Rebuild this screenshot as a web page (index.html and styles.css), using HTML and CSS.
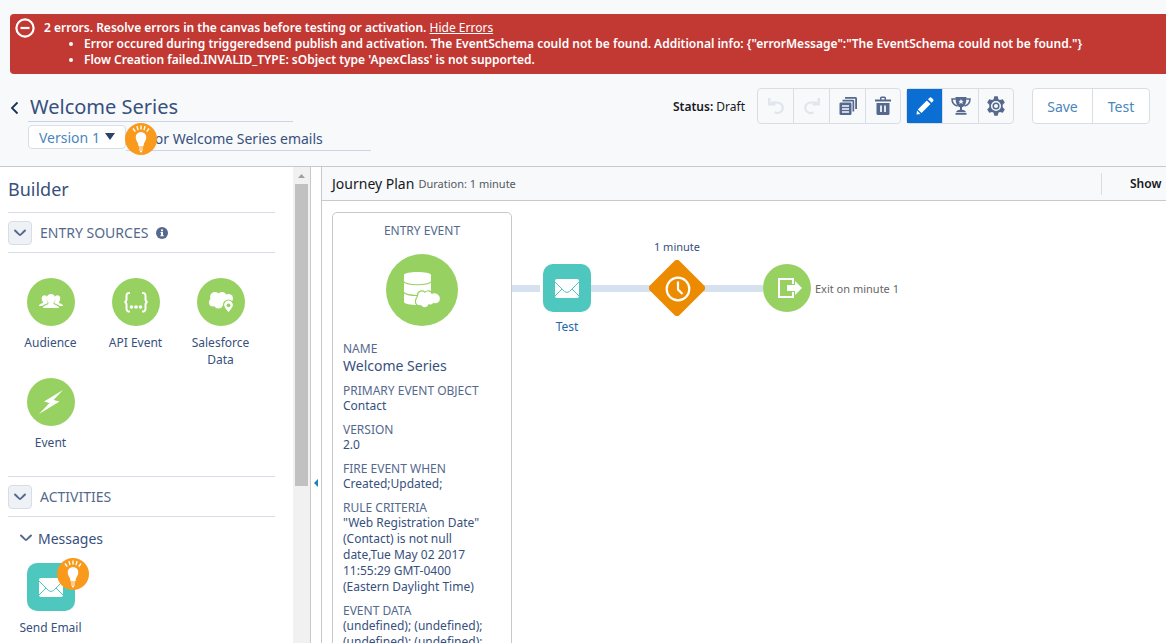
FILE: index.html
```html
<!DOCTYPE html>
<html lang="en">
<head>
<meta charset="utf-8">
<title>Welcome Series</title>
<link rel="stylesheet" href="styles.css">
</head>
<body>
<svg class="defs" aria-hidden="true">
  <symbol id="bulb" viewBox="0 0 32 32">
    <circle cx="16" cy="16" r="16" fill="#f99a1c"/>
    <g stroke="#fff" stroke-width="1.4" fill="none"><path d="M16 2.5v4M12 3.2l1 4M20 3.2l-1 4M8 5.5l2.3 3.2M24 5.5l-2.3 3.2"/></g>
    <path fill="#fff" d="M16 9a5.3 5.3 0 0 0-5.300 5.400c0 2.600 1.700 4 2.300 6.100.3 1 .3 2.500.8 3h4.400c.5-.5.5-2 .8-3 .6-2.100 2.300-3.500 2.300-6.100A5.300 5.300 0 0 0 16 9z"/>
    <path stroke="#fff" stroke-width="1.200" d="M14 25h4M14 27h4M15 28.700h2"/>
  </symbol>
  <symbol id="mail" viewBox="0 0 24 19">
    <rect width="24" height="19" rx="2" fill="#fff"/>
    <path d="M0 3l9.500 9.500q2.500 2 5 0L24 3M0 17l7-7M24 17l-7-7" fill="none" stroke="#4ec7be" stroke-width="1"/>
  </symbol>
  <symbol id="chevron" viewBox="0 0 12 8"><path d="M1 1.500q4.500 4.500 5 4.500t5-4.500" fill="none" stroke="currentColor" stroke-width="1.900" stroke-linecap="round"/></symbol>
</svg>

<section class="errors" role="alert">
  <svg class="errors-icon" viewBox="0 0 20 20"><circle cx="10" cy="10" r="8.600" fill="none" stroke="#fff" stroke-width="2.200"/><path d="M5.500 10h9" stroke="#fff" stroke-width="2.200"/></svg>
  <div>
    <p>2 errors. Resolve errors in the canvas before testing or activation. <a href="#">Hide Errors</a></p>
    <ul>
      <li>Error occured during triggeredsend publish and activation. The EventSchema could not be found. Additional info: {"errorMessage":"The EventSchema could not be found."}</li>
      <li>Flow Creation failed.INVALID_TYPE: sObject type 'ApexClass' is not supported.</li>
    </ul>
  </div>
</section>

<header class="header">
  <a class="back" href="#" aria-label="Back"><svg viewBox="0 0 9 14"><path d="M7.500 1.500L2 7l5.500 5.500" fill="none" stroke="currentColor" stroke-width="1.800"/></svg></a>
  <div class="naming">
    <input class="title" aria-label="Journey name" value="Welcome Series">
    <div class="subline">
      <div class="version">
        <select aria-label="Version"><option>Version 1</option></select>
        <svg viewBox="0 0 10 7"><path d="M0 0h10L5 7z" fill="#2a426c"/></svg>
      </div>
      <input class="description" aria-label="Description" value="for Welcome Series emails">
      <svg class="bulb bulb-header"><use href="#bulb"/></svg>
    </div>
  </div>
  <div class="tools">
    <p class="status"><b>Status:</b> Draft</p>
    <div class="group icons">
      <button disabled aria-label="Undo"><svg viewBox="0 0 20 20"><path d="M5 6.500h6.500a5.300 5.300 0 1 1-3 9.700" fill="none" stroke="currentColor" stroke-width="2.200"/><path d="M2 2v7.500h7.500V7.200H4.500V2z" fill="currentColor"/></svg></button>
      <button disabled aria-label="Redo"><svg viewBox="0 0 20 20"><path d="M15 6.500H8.500a5.300 5.300 0 1 0 3 9.700" fill="none" stroke="currentColor" stroke-width="2.200"/><path d="M18 2v7.500h-7.500V7.200h5V2z" fill="currentColor"/></svg></button>
      <button aria-label="Copy"><svg viewBox="0 0 20 20"><path fill="currentColor" d="M7 1h10.500A1.500 1.500 0 0 1 19 2.500V13h-1.800V2.800H7z"/><path fill="currentColor" d="M4.500 3.800H15a1.200 1.200 0 0 1 1.200 1.200v10.500h-1.700V5.500H4.500z"/><rect x="1.500" y="6.500" width="12" height="12.500" rx="1.200" fill="currentColor"/><path d="M4 10h7M4 13h7M4 16h7" stroke="#f8f9fb" stroke-width="1.300"/></svg></button>
      <button aria-label="Delete"><svg viewBox="0 0 20 20"><path fill="currentColor" d="M2 3.500h5V2q0-1.500 1.500-1.500h3Q13 .5 13 2v1.500h5v2H2zM8.500 2v1.500h3V2zM3.500 7h13v10.500q0 1.500-1.500 1.500H5q-1.500 0-1.500-1.500z" fill-rule="evenodd"/><path d="M8 9.500v6.500M12 9.500v6.500" stroke="#f8f9fb" stroke-width="1.700"/></svg></button>
    </div>
    <div class="group icons">
      <button class="active" aria-label="Edit"><svg viewBox="0 0 20 20"><path fill="currentColor" d="M13 3.200l1.500-1.500q1-.9 2 0l1.600 1.600q1 1 0 2l-1.500 1.500zM11.800 4.400l3.700 3.700-9 9-3.700-3.700zM2 14.500l3.500 3.500L1.500 18.500z"/></svg></button>
      <button aria-label="Goals"><svg viewBox="0 0 20 20"><path fill="currentColor" d="M4.500 1h11c0 5-1 9.500-4.500 10.300v2.500c2 .2 3.500 1 4 2.500H5c.5-1.500 2-2.300 4-2.500v-2.500C5.500 10.500 4.500 6 4.500 1zM4.500 17h11v1.800h-11z"/><path d="M4.800 3H1c0 4 1.500 6 5.500 7M15.200 3H19c0 4-1.500 6-5.500 7" fill="none" stroke="currentColor" stroke-width="1.500"/><path fill="#f8f9fb" d="M10 3l.8 1.800 1.900.1-1.500 1.200.6 1.900L10 7l-1.800 1 .6-1.900-1.500-1.200 1.900-.1z"/></svg></button>
      <button aria-label="Settings"><svg viewBox="0 0 20 20"><path fill="currentColor" d="M8.300.3h3.400l.7 2.900 1.500.9 2.900-.9 2 3.400-2.100 2.100v2.600l2.100 2.100-2 3.400-2.900-.9-1.500.9-.7 2.900H8.300l-.7-2.900-1.500-.9-2.900.9-2-3.400 2.100-2.100V8.700L1.200 6.600l2-3.400 2.900.9 1.500-.9z"/><circle cx="10" cy="10" r="4.300" fill="none" stroke="#f8f9fb" stroke-width="1.500"/><circle cx="10" cy="10" r="2" fill="#f8f9fb"/></svg></button>
    </div>
    <div class="group actions">
      <button>Save</button>
      <button>Test</button>
    </div>
  </div>
</header>

<div class="workspace">
  <aside class="sidebar">
    <h2>Builder</h2>
    <div class="section">
      <button class="toggle" aria-label="Toggle entry sources"><svg><use href="#chevron"/></svg></button>
      <h3>ENTRY SOURCES</h3>
      <svg class="info" viewBox="0 0 12 12"><circle cx="6" cy="6" r="6" fill="#54698d"/><path fill="#fff" d="M5 2.500h2v1.700H5zM4.500 5H7v3.300h.8v1H4.300v-1H5V6h-.5z"/></svg>
    </div>
    <div class="palette">
      <div class="item">
        <svg class="shape" viewBox="0 0 48 48"><circle cx="24" cy="24" r="24" fill="#97d162"/><g fill="#fff"><path d="M16 30c0-2 2-2.500 4.500-3.500 1.200-.5 1.200-1.500.5-2.500-2-2.500-1.800-8 3-8s5 5.500 3 8c-.7 1-.7 2 .5 2.500C30 27.500 32 28 32 30z"/><path d="M12 28c0-1.800 1.500-2 3.300-2.800 1-.4.8-1.200.3-2-1.500-2-1.200-6 2-6q2.200 0 2.400 1.500-.8 3.300.8 6-.3.800-2.500 1.500Q16 26.800 15.500 28zM36 28c0-1.800-1.500-2-3.300-2.800-1-.4-.8-1.200-.3-2 1.500-2 1.200-6-2-6q-2.200 0-2.400 1.500.8 3.300-.8 6 .3.800 2.500 1.500Q32 26.800 32.500 28z"/></g></svg>
        <span>Audience</span>
      </div>
      <div class="item">
        <svg class="shape" viewBox="0 0 48 48"><circle cx="24" cy="24" r="24" fill="#97d162"/><path d="M18 15q-3.500-.3-3.500 3v3q0 2.700-2 3 2 .3 2 3v3.500q0 3.300 3.500 3M30 15q3.500-.3 3.500 3v3q0 2.700 2 3-2 .3-2 3v3.500q0 3.300-3.500 3" fill="none" stroke="#fff" stroke-width="2"/><g fill="#fff"><circle cx="19.500" cy="29" r="1.800"/><circle cx="24" cy="29" r="1.800"/><circle cx="28.500" cy="29" r="1.800"/></g></svg>
        <span>API Event</span>
      </div>
      <div class="item">
        <svg class="shape" viewBox="0 0 48 48"><circle cx="24" cy="24" r="24" fill="#97d162"/><g fill="#fff"><circle cx="18" cy="19" r="5"/><circle cx="25" cy="18.500" r="4.500"/><circle cx="31.500" cy="20.500" r="4.500"/><circle cx="16" cy="24.500" r="4"/><circle cx="21.500" cy="26" r="4.500"/><circle cx="27" cy="23" r="5"/></g><path d="M31.500 22a5 5 0 0 0-5 5c0 3.500 3.500 5.500 5 8.500 1.500-3 5-5 5-8.500a5 5 0 0 0-5-5z" fill="#fff" stroke="#97d162" stroke-width="1.200"/><circle cx="31.500" cy="27.300" r="1.900" fill="#97d162"/></svg>
        <span>Salesforce Data</span>
      </div>
      <div class="item">
        <svg class="shape" viewBox="0 0 48 48"><circle cx="24" cy="24" r="24" fill="#97d162"/><path fill="#fff" d="M36 12L17 23.500l5.500 1.500L12 36l20.500-12.500-6-1.500z"/></svg>
        <span>Event</span>
      </div>
    </div>
    <div class="section">
      <button class="toggle" aria-label="Toggle activities"><svg><use href="#chevron"/></svg></button>
      <h3>ACTIVITIES</h3>
    </div>
    <h4><svg><use href="#chevron"/></svg>Messages</h4>
    <div class="palette messages">
      <div class="item">
        <div class="tile"><svg class="mail"><use href="#mail"/></svg><svg class="bulb bulb-tile"><use href="#bulb"/></svg></div>
        <span>Send Email</span>
      </div>
    </div>
  </aside>
  <div class="scrollbar"><svg viewBox="0 0 7 4"><path d="M0 4l3.500-4L7 4z" fill="#a0a0a0"/></svg><div class="thumb"></div></div>
  <button class="collapse" aria-label="Collapse panel"><svg viewBox="0 0 4 8"><path d="M4 0v8L0 4z" fill="#1b83b8"/></svg></button>

  <main class="plan">
    <div class="plan-bar">
      <h1>Journey Plan</h1><span class="duration">Duration: 1 minute</span>
      <span class="show">Show</span>
    </div>
    <div class="canvas">
      <article class="entry">
        <h2>ENTRY EVENT</h2>
        <svg class="entry-icon" viewBox="0 0 72 72"><circle cx="36" cy="36" r="36" fill="#97d162"/><path fill="#fff" d="M18 21c0-4 27-4 27 0v27c0 4-27 4-27 0z"/><path d="M17 27c3 5 26 5 29 0M17 38c3 3 8 3.500 14 3.500" fill="none" stroke="#97d162" stroke-width="1.200"/><path fill="#fff" stroke="#97d162" stroke-width="1.200" d="M31.500 42c-.5-4.500 4.500-6.500 7.500-3.800 2.500-2.500 6-1.500 7 1 4-1.500 8.500 1 8.500 5.300s-3.500 6-7 5c-1.500 2-3.500 1.700-4.500 1.300-1.500 4-6.500 4-8 1-4 .5-6-2-5.500-5 .2-2 1-3.500 2-4.800z"/></svg>
        <dl>
          <div><dt>NAME</dt><dd class="name">Welcome Series</dd></div>
          <div><dt>PRIMARY EVENT OBJECT</dt><dd>Contact</dd></div>
          <div><dt>VERSION</dt><dd>2.0</dd></div>
          <div><dt>FIRE EVENT WHEN</dt><dd>Created;Updated;</dd></div>
          <div><dt>RULE CRITERIA</dt><dd>"Web Registration Date"<br>(Contact) is not null<br>date,Tue May 02 2017<br>11:55:29 GMT-0400<br>(Eastern Daylight Time)</dd></div>
          <div><dt>EVENT DATA</dt><dd>(undefined); (undefined);<br>(undefined); (undefined);</dd></div>
        </dl>
      </article>
      <div class="link link-entry"></div>
      <div class="link link-email"></div>
      <div class="node email">
        <div class="tile"><svg class="mail"><use href="#mail"/></svg></div>
        <a href="#">Test</a>
      </div>
      <div class="node wait">
        <span>1 minute</span>
        <svg viewBox="0 0 56 56"><rect x="7" y="7" width="42" height="42" rx="4" transform="rotate(45 28 28)" fill="#ed8b00"/><circle cx="29" cy="29" r="11.300" fill="none" stroke="#fff" stroke-width="2.200"/><path d="M29 21.500v8l4.500 4.500" fill="none" stroke="#fff" stroke-width="2.200"/></svg>
      </div>
      <div class="node exit">
        <svg viewBox="0 0 48 48"><circle cx="24" cy="24" r="24" fill="#97d162"/><path d="M30 20v-5H16v18h14v-5" fill="none" stroke="#fff" stroke-width="2"/><path fill="#fff" d="M24 21h8v-4l7 7-7 7v-4h-8z"/></svg>
        <span>Exit on minute 1</span>
      </div>
    </div>
  </main>
</div>
</body>
</html>
```
FILE: styles.css
```css
* { box-sizing: border-box; }
body {
  margin: 0;
  height: 100vh;
  display: flex;
  flex-direction: column;
  overflow: hidden;
  background: #f8f9fb;
  color: #37507e;
  font-family: "Noto Sans", sans-serif;
  font-size: 12px;
}
h1, h2, h3, h4, p, ul, dl, dd { margin: 0; font-weight: 400; }
button, input, select { font: inherit; color: inherit; margin: 0; }
svg { display: block; flex: none; }
.defs { position: absolute; width: 0; height: 0; }

.errors {
  flex: none;
  display: flex;
  gap: 9px;
  margin: 14px 0 0 10px;
  padding: 6px 5px;
  height: 60px;
  border-radius: 4px 0 0 4px;
  background: #c23934;
  color: #fff;
  font-size: 12px;
  line-height: 16px;
  white-space: nowrap;
}
.errors p, .errors li { font-weight: 600; }
.errors a { color: #fff; font-weight: 400; }
.errors ul { padding-left: 40px; }
.errors-icon { width: 20px; height: 20px; margin-top: -2px; }

.header {
  flex: none;
  display: flex;
  align-items: flex-start;
  height: 93px;
  padding: 14px 16px 0 10px;
  border-bottom: 1px solid #c9c9c9;
}
.back { width: 18px; padding-top: 13px; color: #16325c; }
.back svg { width: 9px; height: 14px; }
.naming { width: 343px; padding-top: 4px; }
.naming input { display: block; background: none; border: 0; border-bottom: 1px solid #ccd3e8; outline: 0; border-radius: 0; }
.title { width: 265px; height: 30px; padding: 0 2px; font-size: 20px; }
.subline { position: relative; display: flex; padding-top: 3px; }
.version { position: relative; flex: none; width: 98px; height: 24px; }
.version select { width: 100%; height: 100%; padding: 0 10px; border: 1px solid #d8dde6; border-radius: 4px; background: #fff; color: #4a86bd; font-size: 14px; appearance: none; }
.version svg { position: absolute; right: 11px; top: 8px; width: 10px; height: 7px; }
.naming .description { flex: 1; min-width: 0; height: 26px; padding: 2px 0 0 24px; font-size: 14px; }
.bulb { position: absolute; width: 32px; height: 32px; }
.bulb-header { left: 97px; top: 1px; }

.tools { margin-left: auto; display: flex; }
.status { padding-right: 12px; line-height: 38px; color: #16181d; }
.status b { font-weight: 600; }
.group { display: flex; height: 36px; border: 1px solid #d8dde6; border-radius: 4px; }
.group button { border: 0; border-right: 1px solid #d8dde6; background: none; padding: 0; }
.group button:last-child { border-right: 0; }
.icons button { width: 36px; display: flex; align-items: center; justify-content: center; color: #54698d; }
.icons button:last-child { width: 34px; }
.icons svg { width: 20px; height: 20px; }
.icons button:disabled { color: #e0e5ee; }
.icons .active { background: #0a6ed3; color: #fff; }
.icons + .icons { margin-left: 5px; }
.actions { margin-left: 18px; background: #fff; }
.actions button { width: 60px; font-size: 14px; color: #4a86bd; }
.actions button:last-child { width: 56px; }

.workspace { flex: 1; min-height: 0; display: flex; background: #fff; }
.sidebar { flex: none; width: 293px; padding: 0 18px 0 8px; overflow: hidden; }
.sidebar h2 { height: 45px; font-size: 18px; line-height: 45px; }
.section { display: flex; align-items: center; gap: 8px; height: 41px; border: solid #d8dde6; border-width: 1px 0; color: #54698d; }
.section h3 { font-size: 14px; }
.toggle { width: 24px; height: 24px; padding: 0; display: flex; align-items: center; justify-content: center; border: 1px solid #d8dde6; border-radius: 4px; background: #eef1f6; color: #54698d; }
.toggle svg, h4 svg { width: 12px; height: 8px; }
.info { width: 12px; height: 12px; }
.palette { display: grid; grid-template-columns: repeat(3, 85px); row-gap: 10px; padding: 25px 0; }
.item { display: flex; flex-direction: column; align-items: center; gap: 8px; line-height: 17px; text-align: center; }
.item span { width: 64px; }
.shape { width: 48px; height: 48px; }
.tile { position: relative; width: 48px; height: 48px; display: flex; align-items: center; justify-content: center; border-radius: 10px; background: #4ec7be; }
.mail { width: 24px; height: 19px; }
.bulb-tile { left: 30px; top: -5px; }
h4 { display: flex; align-items: center; gap: 6px; height: 42px; padding-left: 12px; font-size: 14px; }
h4 svg { color: #54698d; }
.messages { padding-top: 4px; }
.messages .item span { width: auto; }

.scrollbar { flex: none; width: 18px; padding: 7px 3px 0 2px; display: flex; flex-direction: column; align-items: center; gap: 6px; background: #f1f1f1; border-right: 1px solid #c9c9c9; }
.scrollbar svg { width: 7px; height: 4px; }
.thumb { width: 13px; height: 302px; background: #c1c1c1; }
.collapse { flex: none; width: 10px; padding: 0 3px; border: 0; background: #fff; display: flex; align-items: center; }
.collapse svg { width: 4px; height: 8px; margin-top: 156px; }

.plan { flex: 1; min-width: 0; display: flex; flex-direction: column; border-left: 1px solid #c9c9c9; }
.plan-bar { flex: none; height: 34px; display: flex; align-items: center; gap: 4px; padding-left: 10px; background: #f8f9fb; border-bottom: 1px solid #c9c9c9; }
.plan-bar h1 { font-size: 14px; color: #16181d; }
.duration { font-size: 11px; color: #54585f; }
.show { margin-left: auto; width: 65px; padding-left: 28px; line-height: 22px; border-left: 1px solid #d8dde6; color: #16181d; font-weight: 600; }
.canvas { position: relative; flex: 1; min-height: 0; overflow: hidden; }
.entry { position: absolute; left: 10px; top: 11px; width: 180px; height: 480px; padding: 10px; border: 1px solid #c9c9c9; border-radius: 5px; }
.entry h2 { font-size: 12px; line-height: 16px; text-align: center; color: #54698d; }
.entry-icon { width: 72px; height: 72px; margin: 15px auto; }
dl { display: grid; gap: 8px; }
dt { line-height: 15px; color: #54698d; }
dd { line-height: 16px; white-space: nowrap; }
dd.name { font-size: 14px; line-height: 19px; }
.link { position: absolute; top: 84px; height: 7px; background: #d5e1ee; }
.link-entry { left: 190px; width: 28px; }
.link-email { left: 269px; width: 172px; }
.node { position: absolute; display: flex; flex-direction: column; align-items: center; }
.email { left: 221px; top: 63px; gap: 6px; }
.email a { color: #1b69ab; text-decoration: none; line-height: 18px; }
.wait { left: 327px; top: 38px; gap: 5px; }
.wait span { font-size: 11px; line-height: 16px; }
.wait svg { width: 56px; height: 56px; }
.exit { left: 441px; top: 63px; flex-direction: row; gap: 4px; color: #666; font-size: 11px; }
.exit svg { width: 48px; height: 48px; }
```
